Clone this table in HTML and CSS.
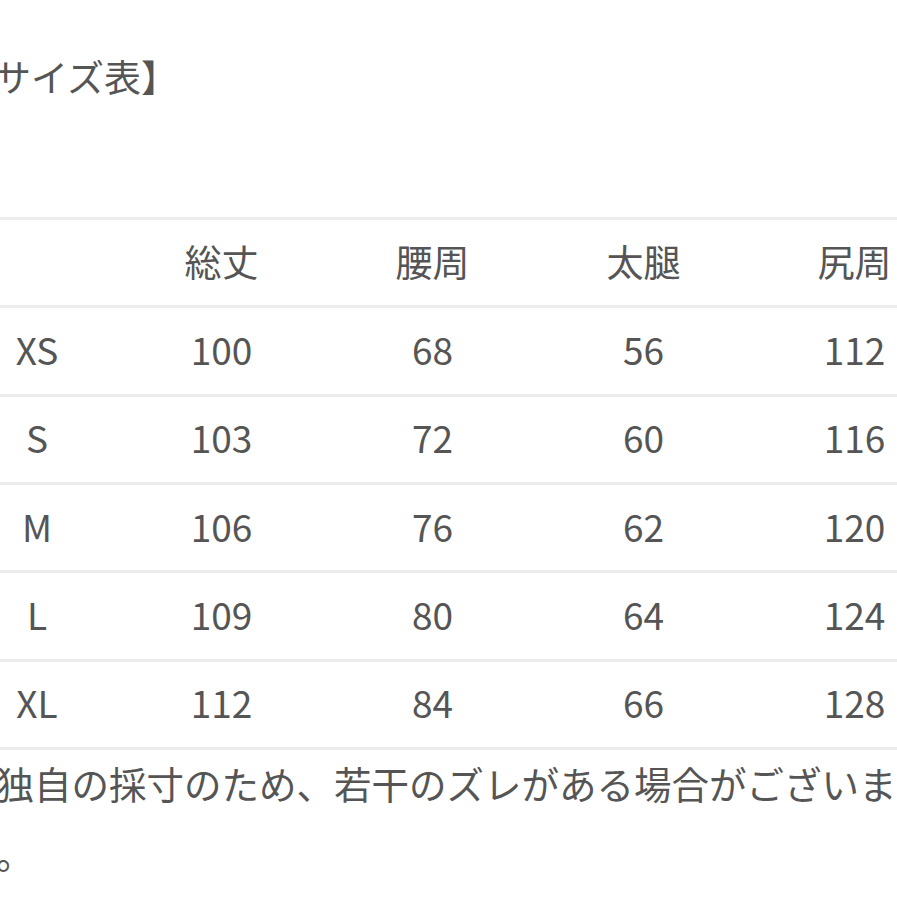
FILE: index.html
```html
<!DOCTYPE html>
<html lang="ja">
<head>
<meta charset="utf-8">
<link rel="stylesheet" href="styles.css">
</head>
<body>
<div class="page">
  <h1 class="title">【サイズ表】</h1>
  <div class="table">
    <div class="row head">
      <div class="cell size"></div>
      <div class="cell">総丈</div>
      <div class="cell">腰周</div>
      <div class="cell">太腿</div>
      <div class="cell">尻周</div>
    </div>
    <div class="row">
      <div class="cell size">XS</div>
      <div class="cell">100</div>
      <div class="cell">68</div>
      <div class="cell">56</div>
      <div class="cell">112</div>
    </div>
    <div class="row">
      <div class="cell size">S</div>
      <div class="cell">103</div>
      <div class="cell">72</div>
      <div class="cell">60</div>
      <div class="cell">116</div>
    </div>
    <div class="row">
      <div class="cell size">M</div>
      <div class="cell">106</div>
      <div class="cell">76</div>
      <div class="cell">62</div>
      <div class="cell">120</div>
    </div>
    <div class="row">
      <div class="cell size">L</div>
      <div class="cell">109</div>
      <div class="cell">80</div>
      <div class="cell">64</div>
      <div class="cell">124</div>
    </div>
    <div class="row last">
      <div class="cell size">XL</div>
      <div class="cell">112</div>
      <div class="cell">84</div>
      <div class="cell">66</div>
      <div class="cell">128</div>
    </div>
  </div>
  <div class="note">
    <p class="note-line first">※当店独自の採寸のため、若干のズレがある場合がございます</p>
    <p class="note-line second">。</p>
  </div>
</div>
</body>
</html>
```
FILE: styles.css
```css
html, body {
  margin: 0;
  padding: 0;
  background: #ffffff;
  overflow: hidden;
}
body {
  width: 897px;
  height: 897px;
  font-family: "Noto Sans CJK JP", "Noto Sans", sans-serif;
  color: #555555;
}
.page {
  width: 897px;
  height: 897px;
  overflow: hidden;
}
.title {
  margin: 0;
  padding-top: 51px;
  margin-left: -43px;
  font-size: 37px;
  font-weight: normal;
  line-height: 50px;
  white-space: nowrap;
}
.table {
  margin-top: 116px;
  margin-left: -42px;
  width: 1002px;
  border-top: 3px solid #ececec;
}
.row {
  display: grid;
  grid-template-columns: 158px 211px 211px 211px 211px;
  height: 85.33px;
  border-bottom: 3px solid #ececec;
  align-items: center;
  font-size: 37px;
}
.cell {
  text-align: center;
  line-height: 1;
  padding-bottom: 3px;
}
.note {
  font-size: 37.5px;
  line-height: 66px;
}
.note-line {
  margin: 0;
  white-space: nowrap;
}
.note-line.first {
  margin-left: -116px;
}
.note-line.second {
  margin-left: -4px;
  margin-top: 4px;
}
```
